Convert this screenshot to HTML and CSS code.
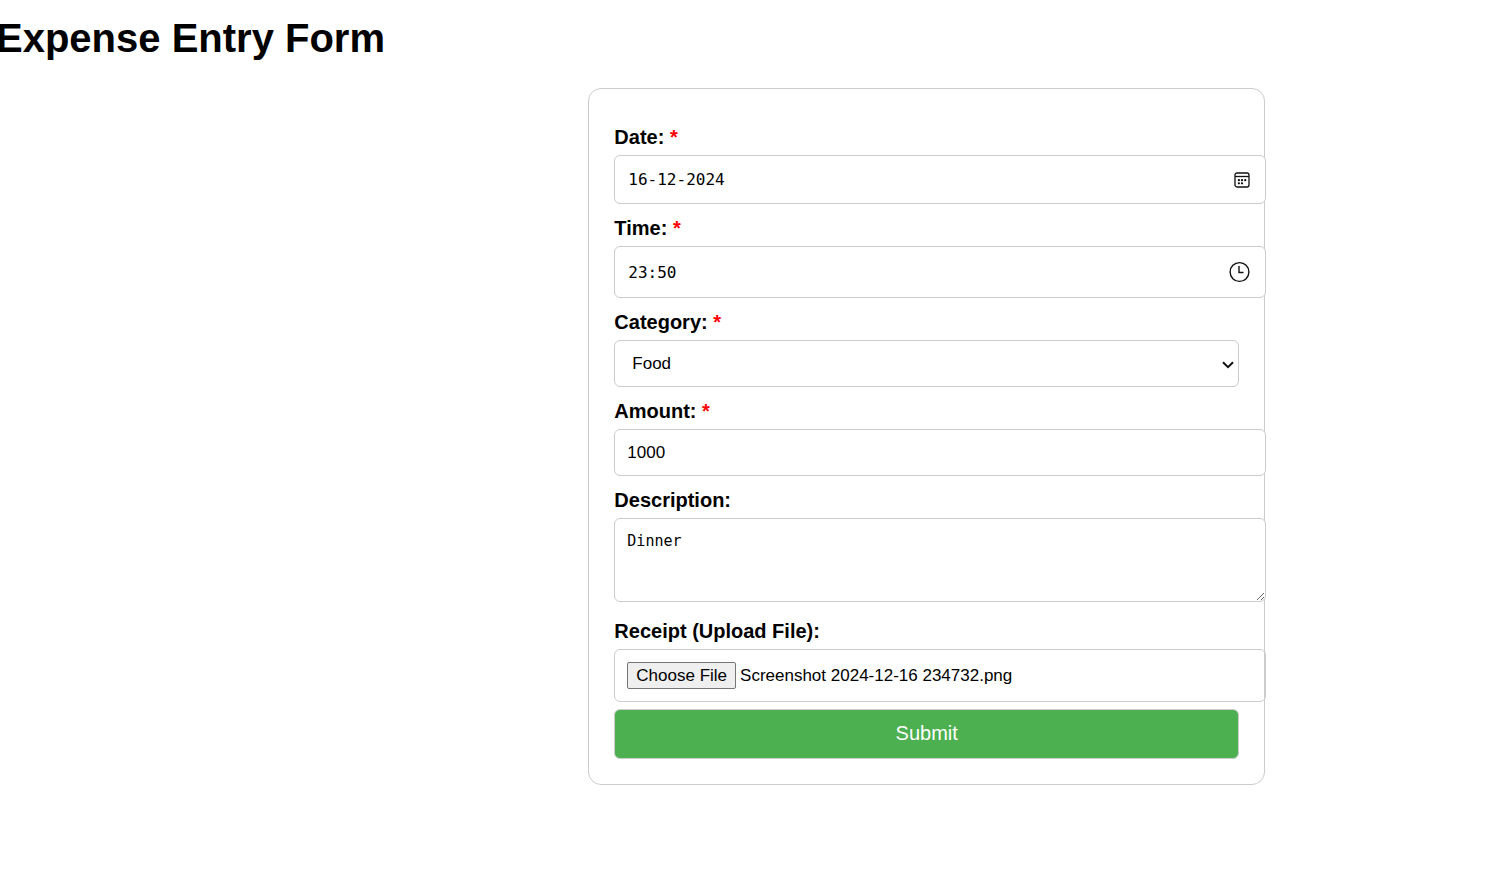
FILE: index.html
```html
<!DOCTYPE html>
<html lang="en">
<head>
<meta charset="utf-8">
<meta name="viewport" content="width=device-width, initial-scale=1">
<title>Expense Entry Form</title>
<link rel="stylesheet" href="styles.css">
</head>
<body>
<h1 class="title">Expense Entry Form</h1>
<form class="form">
  <label class="label" for="date">Date: <span class="required">*</span></label>
  <div class="field field-wide">
    <input class="control control-date" type="text" id="date" value="16-12-2024" required>
    <button class="picker" type="button" aria-label="Show date picker">
      <svg width="16" height="16" viewBox="0 0 16 16" fill="none" stroke="#111" stroke-width="1.3">
        <rect x="1" y="1" width="14" height="14" rx="2"/>
        <path d="M1 4.5h14"/>
        <g fill="#111" stroke="none"><circle cx="4.9" cy="8.2" r="1.15"/><circle cx="8" cy="8.2" r="1.15"/><circle cx="11.2" cy="8.2" r="1.15"/><circle cx="4.9" cy="11.3" r="1.15"/><circle cx="8" cy="11.3" r="1.15"/></g>
      </svg>
    </button>
  </div>

  <label class="label" for="time">Time: <span class="required">*</span></label>
  <div class="field field-wide">
    <input class="control control-time" type="text" id="time" value="23:50" required>
    <button class="picker" type="button" aria-label="Show time picker">
      <svg width="21" height="22" viewBox="0 0 21 22" fill="none" stroke="#111" stroke-width="1.4">
        <circle cx="10.5" cy="11" r="9.4"/>
        <path d="M10 5v6.5h4.5"/>
      </svg>
    </button>
  </div>

  <label class="label" for="category">Category: <span class="required">*</span></label>
  <div class="field">
    <select class="control control-select" id="category" required>
      <option>Food</option>
    </select>
    <svg class="chevron" width="12" height="8" viewBox="0 0 12 8" fill="none" stroke="#111" stroke-width="2"><path d="M1 1.2l5 5 5-5"/></svg>
  </div>

  <label class="label" for="amount">Amount: <span class="required">*</span></label>
  <div class="field field-wide">
    <input class="control control-amount" type="text" inputmode="decimal" id="amount" value="1000" required>
  </div>

  <label class="label" for="description">Description:</label>
  <div class="field field-wide field-area">
    <textarea class="control control-area" id="description">Dinner</textarea>
  </div>

  <label class="label" for="receipt">Receipt (Upload File):</label>
  <div class="field field-wide file">
    <input type="file" id="receipt" hidden>
    <button class="file-button" type="button">Choose File</button>
    <span class="file-name">Screenshot 2024-12-16 234732.png</span>
  </div>

  <button class="submit" type="submit">Submit</button>
</form>
</body>
</html>
```
FILE: styles.css
```css
* {
  box-sizing: border-box;
}

body {
  margin: 0;
  background: #fff;
  color: #000;
  font-family: "Liberation Sans", Arial, sans-serif;
  overflow-x: hidden;
}

.title {
  margin: 16px 0 28px -4px;
  font-size: 40px;
  line-height: 44px;
}

.form {
  width: calc(45% - 1px);
  margin-left: calc(39% + 1px);
  padding: 24px 25px 25px;
  border: 1px solid #ccc;
  border-radius: 13px;
}

.label {
  display: block;
  width: fit-content;
  margin: 12px 0 6px;
  font-size: 20px;
  font-weight: bold;
  line-height: 24px;
}

.required {
  color: #f00;
}

.field {
  position: relative;
}

.field-wide {
  margin-right: -27px;
}

.field-area {
  margin-bottom: 17px;
}

.control {
  display: block;
  width: 100%;
  margin: 0;
  padding: 0 12px;
  border: 1px solid #ccc;
  border-radius: 6px;
  background: #fff;
  color: #000;
  font-family: "Liberation Sans", Arial, sans-serif;
  font-size: 17px;
}

.control-date,
.control-time {
  padding: 0 13px;
  font-family: "DejaVu Sans Mono", monospace;
  font-size: 16px;
}

.control-date {
  height: 49px;
}

.control-time {
  height: 52px;
}

.control-select {
  height: 47px;
  padding: 0 17px;
  appearance: none;
}

.control-amount {
  height: 47px;
}

.control-area {
  height: 84px;
  padding: 12px;
  font-family: "DejaVu Sans Mono", monospace;
  font-size: 15px;
  line-height: 20px;
  resize: both;
}

.picker {
  position: absolute;
  top: 0;
  right: 16px;
  bottom: 0;
  display: flex;
  align-items: center;
  padding: 0;
  border: 0;
  background: none;
}

.chevron {
  position: absolute;
  top: 21px;
  right: 5px;
  pointer-events: none;
}

.file {
  display: flex;
  align-items: center;
  gap: 4px;
  height: 53px;
  padding: 0 12px;
  border: 1px solid #ccc;
  border-radius: 6px;
  font-size: 17px;
}

.file-button {
  height: 27px;
  padding: 0 8px;
  border: 1px solid #767676;
  border-radius: 2px;
  background: #efefef;
  color: #000;
  font-family: inherit;
  font-size: 17px;
}

.submit {
  display: block;
  width: 100%;
  height: 50px;
  margin-top: 7px;
  padding: 0 12px 2px;
  border: 1px solid #ccc;
  border-radius: 6px;
  background: #4caf50;
  color: #fff;
  font-family: inherit;
  font-size: 20px;
}
```
